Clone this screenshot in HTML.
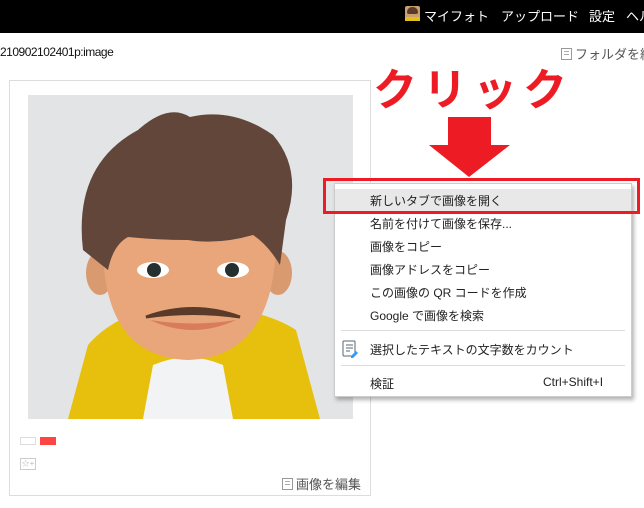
<!DOCTYPE html>
<html><head><meta charset="utf-8"><style>
*{margin:0;padding:0;box-sizing:border-box}
body{width:644px;height:508px;overflow:hidden;background:#fff;position:relative;font-family:"Liberation Sans","Noto Sans CJK JP",sans-serif;}
.top{position:absolute;left:0;top:0;width:644px;height:33px;background:#000;color:#fff;font-size:13px;}
.top span{position:absolute;top:6px;white-space:nowrap}
.abs{position:absolute;white-space:nowrap}
.menu{position:absolute;left:334px;top:183px;width:298px;height:214px;background:#fff;border:1px solid #ccc;box-shadow:2px 3px 4px rgba(0,0,0,.3);}
.mi{position:absolute;left:35px;font-size:12px;color:#222}
.sep{position:absolute;left:6px;right:6px;height:1px;background:#ddd}
.ico{display:inline-block;width:11px;height:12px;border:1px solid #999;vertical-align:-1px;margin-right:3px;background:repeating-linear-gradient(#fff 0 2px,#aaa 2px 3px);background-clip:content-box;padding:2px}
</style></head><body>
<div class="top">
  <div style="position:absolute;left:405px;top:6px;width:15px;height:15px;background:#c9a070;border-radius:2px"><div style="position:absolute;left:2px;top:1px;width:11px;height:7px;background:#5a3b2a;border-radius:5px 5px 2px 2px"></div><div style="position:absolute;left:0;bottom:0;width:15px;height:4px;background:#e3bf1a"></div></div>
  <span style="left:424px">マイフォト</span>
  <span style="left:501px">アップロード</span>
  <span style="left:589px">設定</span>
  <span style="left:626px">ヘル</span>
</div>
<div class="abs" style="left:0;top:45px;font-size:12px;color:#111;letter-spacing:-0.5px">210902102401p:image</div>
<div class="abs" style="left:561px;top:44px;font-size:13px;color:#555"><span class="ico"></span>フォルダを編</div>

<div style="position:absolute;left:9px;top:80px;width:362px;height:416px;border:1px solid #ddd"></div>
<svg style="position:absolute;left:28px;top:95px" width="325" height="324" viewBox="0 0 325 324">
  <rect width="325" height="324" fill="#e3e4e6"/>
  <path d="M40 324 L60 250 Q90 215 150 210 Q230 210 268 235 L292 324Z" fill="#e6c00c"/>
  <path d="M115 324 L125 270 Q160 255 195 270 L205 324Z" fill="#f2f3f4"/>
  <ellipse cx="72" cy="178" rx="14" ry="22" fill="#d99a6f"/>
  <ellipse cx="250" cy="178" rx="14" ry="22" fill="#d99a6f"/>
  <path d="M75 150 Q75 262 160 265 Q245 262 248 150 Q248 90 160 90 Q75 90 75 150Z" fill="#e8a67a"/>
  <ellipse cx="125" cy="175" rx="16" ry="8" fill="#fff"/><circle cx="126" cy="175" r="7" fill="#243030"/>
  <ellipse cx="205" cy="175" rx="16" ry="8" fill="#fff"/><circle cx="204" cy="175" r="7" fill="#243030"/>
  <path d="M118 222 Q165 205 212 222 Q165 215 118 222Z" fill="#5a3b2a" stroke="#5a3b2a" stroke-width="3"/>
  <path d="M122 225 Q165 245 208 225 Q165 232 122 225Z" fill="#d97c5c"/>
  <path d="M55 155 Q45 70 110 35 Q140 8 162 22 Q205 12 245 40 Q275 75 258 125 L252 170 Q240 150 225 140 Q190 150 160 145 Q130 145 100 142 Q85 150 80 175 Z" fill="#62463a"/>
</svg>
<div style="position:absolute;left:20px;top:437px;width:16px;height:8px;border:1px solid #ddd"></div>
<div style="position:absolute;left:40px;top:437px;width:16px;height:8px;background:#f44"></div>
<div style="position:absolute;left:20px;top:458px;width:16px;height:12px;border:1px solid #ccc;font-size:8px;color:#bbb;line-height:10px;text-align:center">☆+</div>
<div class="abs" style="left:282px;top:474px;font-size:13px;color:#555"><span class="ico"></span>画像を編集</div>

<div class="abs" style="left:373px;top:56px;font-size:44px;font-weight:bold;color:#ed1c24;letter-spacing:6px;font-family:'Noto Sans CJK JP',sans-serif;line-height:60px">クリック</div>
<svg style="position:absolute;left:428px;top:116px" width="84" height="62"><path d="M20 1H63V29H82L41 61L1 29H20Z" fill="#ed1c24"/></svg>

<div class="menu">
  <div style="position:absolute;left:0;top:5px;width:296px;height:23px;background:#e8e8e8"></div>
  <div class="mi" style="top:8px">新しいタブで画像を開く</div>
  <div class="mi" style="top:31px">名前を付けて画像を保存...</div>
  <div class="mi" style="top:54px">画像をコピー</div>
  <div class="mi" style="top:77px">画像アドレスをコピー</div>
  <div class="mi" style="top:100px">この画像の QR コードを作成</div>
  <div class="mi" style="top:123px">Google で画像を検索</div>
  <div class="sep" style="top:146px"></div>
  <svg style="position:absolute;left:7px;top:156px" width="16" height="18"><rect x="1" y="1" width="12" height="15" rx="1" fill="#fff" stroke="#567"/><path d="M4 5h7M4 8h7M4 11h4" stroke="#567"/><path d="M9 16l5-5 2 2-5 5h-2z" fill="#39f"/></svg>
  <div class="mi" style="top:157px">選択したテキストの文字数をカウント</div>
  <div class="sep" style="top:181px"></div>
  <div class="mi" style="top:191px">検証</div>
  <div class="mi" style="top:191px;left:208px">Ctrl+Shift+I</div>
</div>
<div style="position:absolute;left:323px;top:178px;width:317px;height:36px;border:3px solid #ed1c24"></div>
</body></html>
